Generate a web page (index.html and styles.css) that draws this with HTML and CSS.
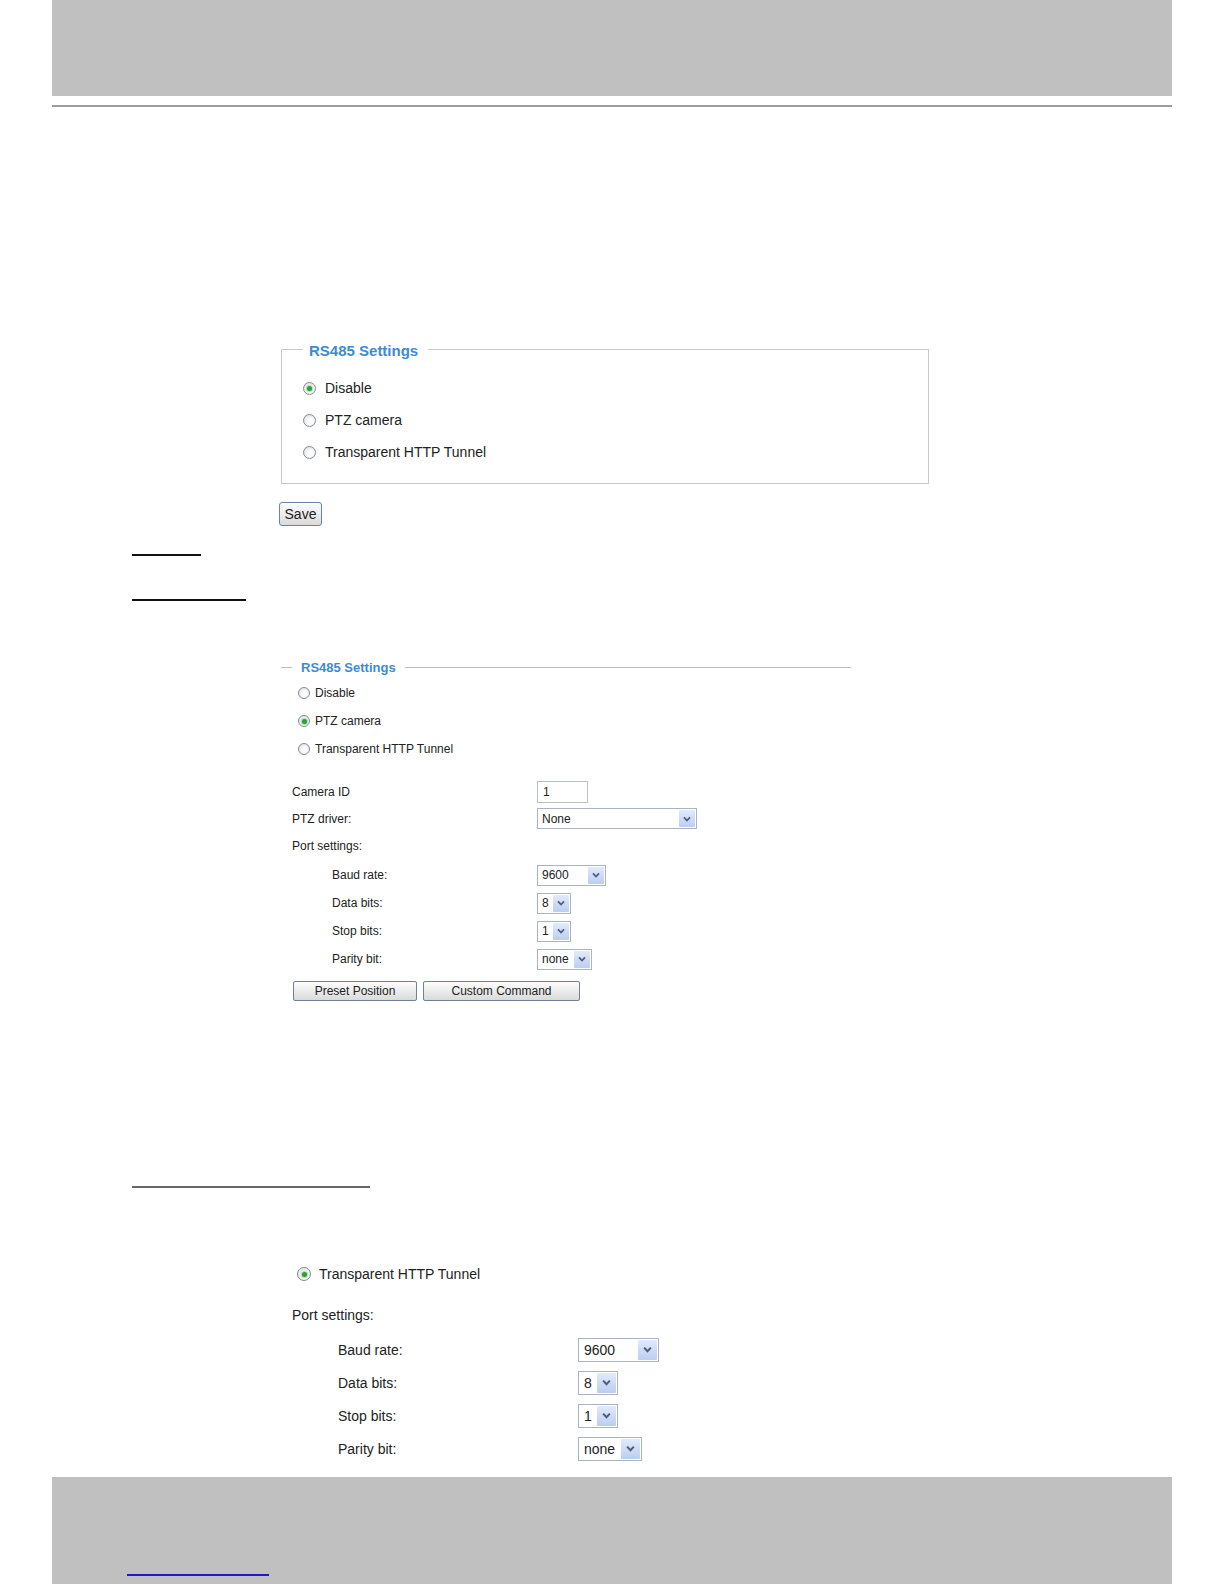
FILE: index.html
```html
<!DOCTYPE html>
<html lang="en">
<head>
    <meta charset="UTF-8">
    <title>RS485 Settings</title>
    <link rel="stylesheet" href="styles.css">
</head>
<body>
<div class="page">
    <div class="band band-top"></div>
    <div class="rule"></div>

    <fieldset class="box box-large">
        <legend>RS485 Settings</legend>
        <div class="radio"><span class="dot checked"></span>Disable</div>
        <div class="radio"><span class="dot"></span>PTZ camera</div>
        <div class="radio"><span class="dot"></span>Transparent HTTP Tunnel</div>
    </fieldset>
    <div class="save-row"><button class="btn btn-save" type="button">Save</button></div>

    <div class="blank-line line-1"></div>
    <div class="blank-line line-2"></div>

    <fieldset class="box box-small">
        <legend>RS485 Settings</legend>
        <div class="radio"><span class="dot"></span>Disable</div>
        <div class="radio"><span class="dot checked"></span>PTZ camera</div>
        <div class="radio"><span class="dot"></span>Transparent HTTP Tunnel</div>
    </fieldset>

    <div class="form form-small">
        <div class="row"><span class="label">Camera ID</span><span class="input">1</span></div>
        <div class="row"><span class="label">PTZ driver:</span>
            <span class="select w-ptz"><span class="value">None</span><span class="arrow"><svg viewBox="0 0 8 6" width="8" height="6"><path d="M1 1.3 L4 4.5 L7 1.3" fill="none" stroke="#4b5f82" stroke-width="1.8"/></svg></span></span>
        </div>
        <div class="row"><span class="label">Port settings:</span></div>
        <div class="sub">
            <div class="row"><span class="label">Baud rate:</span>
                <span class="select w-baud"><span class="value">9600</span><span class="arrow"><svg viewBox="0 0 8 6" width="8" height="6"><path d="M1 1.3 L4 4.5 L7 1.3" fill="none" stroke="#4b5f82" stroke-width="1.8"/></svg></span></span>
            </div>
            <div class="row"><span class="label">Data bits:</span>
                <span class="select w-bits"><span class="value">8</span><span class="arrow"><svg viewBox="0 0 8 6" width="8" height="6"><path d="M1 1.3 L4 4.5 L7 1.3" fill="none" stroke="#4b5f82" stroke-width="1.8"/></svg></span></span>
            </div>
            <div class="row"><span class="label">Stop bits:</span>
                <span class="select w-bits"><span class="value">1</span><span class="arrow"><svg viewBox="0 0 8 6" width="8" height="6"><path d="M1 1.3 L4 4.5 L7 1.3" fill="none" stroke="#4b5f82" stroke-width="1.8"/></svg></span></span>
            </div>
            <div class="row"><span class="label">Parity bit:</span>
                <span class="select w-parity"><span class="value">none</span><span class="arrow"><svg viewBox="0 0 8 6" width="8" height="6"><path d="M1 1.3 L4 4.5 L7 1.3" fill="none" stroke="#4b5f82" stroke-width="1.8"/></svg></span></span>
            </div>
        </div>
    </div>
    <div class="actions">
        <button class="btn btn-preset" type="button">Preset Position</button>
        <button class="btn btn-custom" type="button">Custom Command</button>
    </div>

    <div class="blank-line line-3"></div>

    <div class="radio radio-tunnel"><span class="dot checked"></span>Transparent HTTP Tunnel</div>
    <div class="form form-large">
        <div class="row"><span class="label">Port settings:</span></div>
        <div class="sub">
            <div class="row"><span class="label">Baud rate:</span>
                <span class="select w-baud"><span class="value">9600</span><span class="arrow"><svg viewBox="0 0 8 6" width="9" height="7"><path d="M1 1.3 L4 4.5 L7 1.3" fill="none" stroke="#4b5f82" stroke-width="1.8"/></svg></span></span>
            </div>
            <div class="row"><span class="label">Data bits:</span>
                <span class="select w-bits"><span class="value">8</span><span class="arrow"><svg viewBox="0 0 8 6" width="9" height="7"><path d="M1 1.3 L4 4.5 L7 1.3" fill="none" stroke="#4b5f82" stroke-width="1.8"/></svg></span></span>
            </div>
            <div class="row"><span class="label">Stop bits:</span>
                <span class="select w-bits"><span class="value">1</span><span class="arrow"><svg viewBox="0 0 8 6" width="9" height="7"><path d="M1 1.3 L4 4.5 L7 1.3" fill="none" stroke="#4b5f82" stroke-width="1.8"/></svg></span></span>
            </div>
            <div class="row"><span class="label">Parity bit:</span>
                <span class="select w-parity"><span class="value">none</span><span class="arrow"><svg viewBox="0 0 8 6" width="9" height="7"><path d="M1 1.3 L4 4.5 L7 1.3" fill="none" stroke="#4b5f82" stroke-width="1.8"/></svg></span></span>
            </div>
        </div>
    </div>

    <div class="band band-bottom"><div class="link-line"></div></div>
</div>
</body>
</html>
```

FILE: styles.css
```css
* {
    box-sizing: border-box;
}
html, body {
    margin: 0;
    background: #fff;
}
body {
    font-family: "Liberation Sans", Arial, sans-serif;
    color: #222;
}
.page {
    width: 1224px;
    height: 1584px;
    overflow: hidden;
}

/* grey page bands */
.band {
    width: 1120px;
    margin-left: 52px;
    background: #c0c0c0;
}
.band-top {
    height: 96px;
}
.band-bottom {
    height: 107px;
    margin-top: 12px;
    padding: 97px 0 0 75px;
}
.rule {
    width: 1120px;
    height: 2px;
    margin: 9px 0 0 52px;
    background: #9c9c9c;
}
.link-line {
    width: 142px;
    height: 2px;
    background: #1c1ccc;
}
.blank-line {
    height: 2px;
    margin-left: 132px;
    background: #111;
}
.line-1 {
    width: 69px;
    margin-top: 28px;
}
.line-2 {
    width: 114px;
    margin-top: 43px;
}
.line-3 {
    width: 238px;
    margin-top: 185px;
    background: #666;
}

/* fieldsets */
.box {
    margin: 0;
    min-width: 0;
}
.box legend {
    color: #3b8bd6;
    font-weight: bold;
}
.box-large {
    width: 648px;
    margin: 231px 0 0 281px;
    padding: 12px 0 15px 21px;
    border: 1px solid #c9c9c9;
}
.box-large legend {
    font-size: 15px;
    line-height: 18px;
    padding: 4px 10px 0 6px;
}
.box-small {
    width: 570px;
    margin: 57px 0 0 281px;
    padding: 3px 0 0 17px;
    border: 0;
    border-top: 1px solid #bdbdbd;
}
.box-small legend {
    font-size: 13px;
    line-height: 16px;
    margin-left: -6px;
    padding: 2px 9px 0;
}

/* radios */
.radio {
    display: flex;
    align-items: center;
    height: 32px;
    font-size: 14px;
}
.box-small .radio {
    height: 28px;
    font-size: 12px;
}
.radio-tunnel {
    height: 28px;
    margin: 72px 0 0 297px;
}
.dot {
    position: relative;
    flex: none;
    width: 13px;
    height: 13px;
    margin-right: 9px;
    border: 1px solid #808d9b;
    border-radius: 50%;
    background: radial-gradient(circle at 60% 60%, #fff 25%, #d6d6d6 100%);
}
.box-small .dot {
    width: 12px;
    height: 12px;
    margin-right: 5px;
}
.radio-tunnel .dot {
    width: 14px;
    height: 14px;
    margin-right: 8px;
}
.dot.checked::after {
    content: "";
    position: absolute;
    left: 50%;
    top: 50%;
    width: 5px;
    height: 5px;
    margin: -2.5px 0 0 -2.5px;
    border-radius: 50%;
    background: #2f9e36;
    box-shadow: 0 0 1px 1px #a6dcaa;
}

/* buttons */
.btn {
    font-family: inherit;
    color: #222;
    padding: 0;
    border: 1px solid #6c8299;
    border-radius: 2px;
    background: linear-gradient(#fdfdfd, #ececec 50%, #dadada);
}
.save-row {
    margin: 18px 0 0 279px;
}
.btn-save {
    width: 43px;
    height: 24px;
    font-size: 14px;
    border-radius: 3px;
    border-color: #6a86a3;
}
.actions {
    display: flex;
    gap: 6px;
    margin: 8px 0 0 293px;
}
.actions .btn {
    height: 20px;
    font-size: 12px;
}
.btn-preset {
    width: 124px;
}
.btn-custom {
    width: 157px;
}

/* forms */
.form .row {
    display: flex;
    align-items: center;
}
.form-small {
    margin: 15px 0 0 292px;
    font-size: 12px;
}
.form-small .row {
    height: 27px;
}
.form-small .label {
    width: 245px;
}
.form-small .sub {
    margin-top: 2px;
}
.form-small .sub .row {
    height: 28px;
}
.form-small .sub .label {
    padding-left: 40px;
}
.form-large {
    margin: 13px 0 0 292px;
    font-size: 14px;
}
.form-large .row {
    height: 28px;
}
.form-large .label {
    width: 286px;
}
.form-large .sub {
    margin-top: 4px;
}
.form-large .sub .row {
    height: 33px;
}
.form-large .sub .label {
    padding-left: 46px;
}

.input {
    display: flex;
    align-items: center;
    width: 51px;
    height: 22px;
    padding-left: 5px;
    border: 1px solid #b9c2cc;
    background: #fff;
}

/* fake select boxes */
.select {
    display: flex;
    align-items: stretch;
    height: 21px;
    border: 1px solid #a9b4c2;
    background: #fff;
}
.select .value {
    flex: 1;
    display: flex;
    align-items: center;
    padding-left: 4px;
}
.select .arrow {
    display: flex;
    align-items: center;
    justify-content: center;
    width: 16px;
    margin: 1px;
    border-radius: 1px;
    background: linear-gradient(#e2eafb, #bccdf1);
}
.w-ptz { width: 160px; }
.w-baud { width: 69px; }
.w-bits { width: 34px; }
.w-parity { width: 55px; }

.form-large .select {
    height: 24px;
}
.form-large .select .value {
    padding-left: 5px;
}
.form-large .select .arrow {
    width: 19px;
}
.form-large .w-baud { width: 81px; }
.form-large .w-bits { width: 40px; }
.form-large .w-parity { width: 64px; }
```
